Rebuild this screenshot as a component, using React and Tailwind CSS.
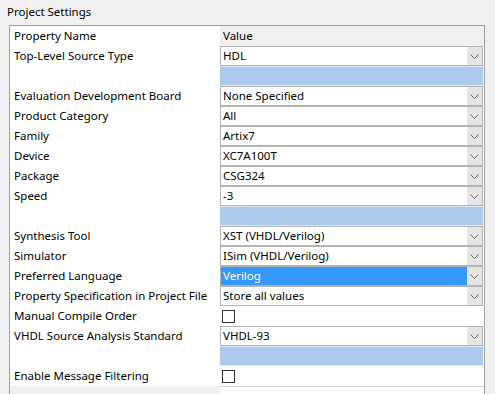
const rows = [
  { label: "Top-Level Source Type", type: "combo", value: "HDL" },
  { label: "", type: "blank" },
  { label: "Evaluation Development Board", type: "combo", value: "None Specified" },
  { label: "Product Category", type: "combo", value: "All" },
  { label: "Family", type: "combo", value: "Artix7" },
  { label: "Device", type: "combo", value: "XC7A100T" },
  { label: "Package", type: "combo", value: "CSG324" },
  { label: "Speed", type: "combo", value: "-3" },
  { label: "", type: "blank" },
  { label: "Synthesis Tool", type: "combo", value: "XST (VHDL/Verilog)" },
  { label: "Simulator", type: "combo", value: "ISim (VHDL/Verilog)" },
  { label: "Preferred Language", type: "combo", value: "Verilog", selected: true },
  { label: "Property Specification in Project File", type: "combo", value: "Store all values" },
  { label: "Manual Compile Order", type: "check" },
  { label: "VHDL Source Analysis Standard", type: "combo", value: "VHDL-93" },
  { label: "", type: "blank" },
  { label: "Enable Message Filtering", type: "check" },
];

function Chevron() {
  return (
    <svg width="9" height="5" viewBox="0 0 9 5">
      <polyline points="0.5,0.5 4.5,4.5 8.5,0.5" fill="none" stroke="#6d6d6d" strokeWidth="1" />
    </svg>
  );
}

function ValueCell({ row }) {
  if (row.type === "blank") {
    return <div className="h-full bg-[#adcbed] border-y border-[#dde8f5] mr-[1px]" />;
  }
  if (row.type === "check") {
    return (
      <div className="h-full flex items-center pl-[2px]">
        <div className="w-[13px] h-[13px] border border-[#333333] bg-white" />
      </div>
    );
  }
  return (
    <div className="h-full flex border border-[#b4b4b4] bg-white mr-[1px]">
      <div
        className={
          "flex-1 flex items-center pl-[2px] " +
          (row.selected ? "bg-[#3399ff] text-white" : "text-black")
        }
      >
        {row.value}
      </div>
      <div className="w-[15px] bg-[#e5e5e5] flex items-center justify-center">
        <Chevron />
      </div>
    </div>
  );
}

export default function App() {
  return (
    <div
      className="w-[495px] h-[394px] overflow-hidden bg-[#f0f0f0] text-[11.5px] text-black"
      style={{ fontFamily: '"Noto Sans", "Open Sans", sans-serif' }}
    >
      {/* 标题 */}
      <div className="h-[25px] pl-[7px] pt-[3px] leading-[17px]">Project Settings</div>

      {/* 属性表 */}
      <div className="ml-[9px] mr-[10px] h-[369px] border-l border-t border-r border-[#a0a0a0] bg-white">
        <div className="grid grid-cols-[210px_264px]">
          <div className="h-[20px] flex items-center pl-[4px] bg-white">Property Name</div>
          <div className="h-[20px] flex items-center pl-[3px] bg-[#f0f0f0]">Value</div>

          {rows.map((row, i) => (
            <div key={i} className="contents">
              <div className="h-[20px] flex items-center pl-[4px] whitespace-nowrap">{row.label}</div>
              <div className="h-[20px]">
                <ValueCell row={row} />
              </div>
            </div>
          ))}

          <div className="h-[10px] bg-[#f0f0f0]" />
          <div className="h-[10px] border-t border-[#d0d0d0] bg-white" />
        </div>
      </div>
    </div>
  );
}
